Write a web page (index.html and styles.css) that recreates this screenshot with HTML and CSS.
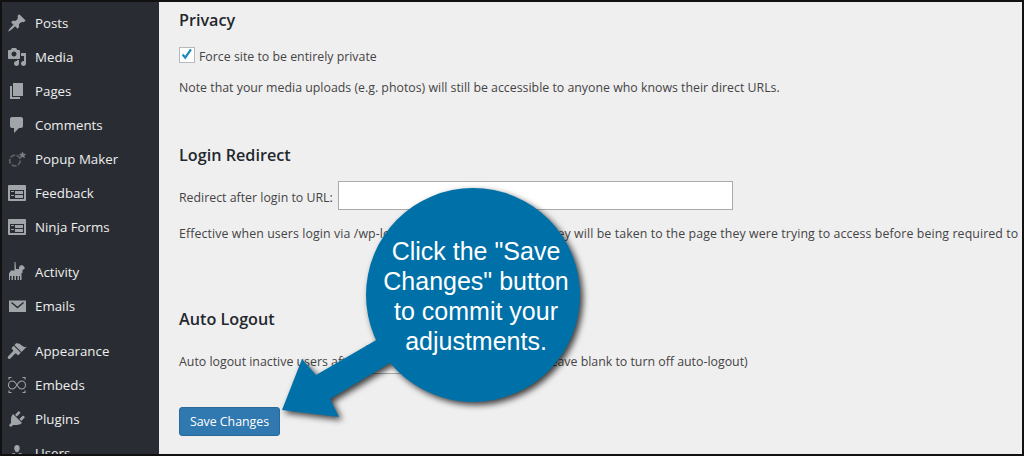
FILE: index.html
```html
<!DOCTYPE html>
<html lang="en">
<head>
<meta charset="utf-8">
<title>Settings</title>
<link rel="stylesheet" href="styles.css">
</head>
<body>
<div class="frame">
  <nav class="sidebar">
    <ul class="menu">
      <li class="item"><svg class="icon" viewBox="0 0 20 20"><path d="M10.44 3.02l1.82-1.82 6.36 6.35-1.83 1.82c-1.05-.68-2.48-.57-3.41.36l-.75.75c-.92.93-1.04 2.35-.35 3.41l-1.83 1.82-2.41-2.41-2.8 2.79c-.42.42-3.38 2.71-3.8 2.29s1.86-3.39 2.28-3.81l2.79-2.79L4.1 9.36l1.83-1.82c1.05.69 2.48.57 3.4-.36l.75-.75c.93-.92 1.05-2.35.36-3.41z"/></svg>Posts</li>
      <li class="item"><svg class="icon" viewBox="0 0 20 20"><path d="M13 11V4c0-.55-.45-1-1-1h-1.67L9 1H5L3.67 3H2c-.55 0-1 .45-1 1v7c0 .55.45 1 1 1h10c.55 0 1-.45 1-1zM7 4.5c1.38 0 2.5 1.12 2.5 2.5S8.38 9.5 7 9.5 4.5 8.38 4.5 7 5.62 4.5 7 4.5zM14 6h5v10.5c0 1.38-1.12 2.5-2.5 2.5S14 17.88 14 16.5s1.12-2.5 2.5-2.5c.17 0 .34.02.5.05V9h-3V6zm-4 8.05V13h2v3.5c0 1.38-1.12 2.5-2.5 2.5S7 17.88 7 16.5 8.12 14 9.5 14c.17 0 .34.02.5.05z"/></svg>Media</li>
      <li class="item"><svg class="icon" viewBox="0 0 20 20"><path d="M6 15V2h10v13H6zm-1 1h8v2H3V5h2v11z"/></svg>Pages</li>
      <li class="item"><svg class="icon" viewBox="0 0 20 20"><path d="M5 2h9c1.1 0 2 .9 2 2v7c0 1.1-.9 2-2 2h-2l-5 5v-5H5c-1.1 0-2-.9-2-2V4c0-1.1.9-2 2-2z"/></svg>Comments</li>
      <li class="item"><svg class="icon icon-popup" viewBox="0 0 20 20"><circle class="ring" cx="8" cy="11.500" r="5.300"/><path d="M15.500 2.500l1.200 2.200 2.400.4-1.700 1.700.4 2.400-2.300-1.100-2.200 1.100.4-2.400-1.700-1.700 2.400-.4z"/></svg>Popup Maker</li>
      <li class="item"><svg class="icon" viewBox="0 0 20 20"><path d="M2 2h16c.55 0 1 .45 1 1v14c0 .55-.45 1-1 1H2c-.55 0-1-.45-1-1V3c0-.55.45-1 1-1zm15 14V7H3v9h14zM4 8v1h3V8H4zm4 0v3h8V8H8zm-4 4v1h3v-1H4zm4 0v3h8v-3H8z"/></svg>Feedback</li>
      <li class="item"><svg class="icon" viewBox="0 0 20 20"><path d="M2 2h16c.55 0 1 .45 1 1v14c0 .55-.45 1-1 1H2c-.55 0-1-.45-1-1V3c0-.55.45-1 1-1zm15 14V7H3v9h14zM4 8v1h3V8H4zm4 0v3h8V8H8zm-4 4v1h3v-1H4zm4 0v3h8v-3H8z"/></svg>Ninja Forms</li>
      <li class="sep"></li>
      <li class="item"><svg class="icon" viewBox="0 0 20 20"><path d="M7.500 0h1l.5 7h3V5l2-2 2 .5 2 2.500-1.500 1.500-1 .5V11h-1v7h-1.500v-4H12v4h-1.500v-4H9v4H7.500v-4H6v4H4.500v-4H3v4H2v-6.500L4 8.500h3.500z"/></svg>Activity</li>
      <li class="item"><svg class="icon" viewBox="0 0 20 20"><rect x="2" y="4.500" width="17" height="11.500"/><path class="chevron" d="M4.500 6.500l6 5 6-5"/></svg>Emails</li>
      <li class="sep"></li>
      <li class="item"><svg class="icon" viewBox="0 0 20 20"><path d="M14.480 11.060L7.410 3.990l1.500-1.500c.5-.56 2.300-.47 3.510.32 1.210.8 1.430 1.280 2.910 2.100 1.180.64 2.450 1.260 4.450.85zm-.71.71L6.700 4.700 4.930 6.470c-.39.39-.39 1.020 0 1.410l1.060 1.060c.39.39.39 1.030 0 1.420L1.500 14.900c-1 1-1 1.700-.3 2.500s1.600.6 2.400-.2l4.300-4.400c.39-.39 1.030-.39 1.420 0l1.060 1.060c.39.39 1.020.39 1.410 0z"/></svg>Appearance</li>
      <li class="item"><svg class="icon icon-thin" viewBox="0 0 20 20"><path d="M2 4.500V2.500h2.500M15.500 2.500H18v2M2 15.500v2h2.500M15.500 17.500H18v-2M10 10C8.500 7.500 7 6 5.500 6a4 4 0 0 0 0 8C7 14 8.500 12.500 10 10s3-4 4.500-4a4 4 0 0 1 0 8C13 14 11.500 12.500 10 10z"/></svg>Embeds</li>
      <li class="item"><svg class="icon" viewBox="0 0 20 20"><path d="M13.110 4.360L9.870 7.600 8 5.730l3.240-3.240c.35-.34 1.050-.2 1.560.32.52.51.66 1.210.31 1.550zm-8 1.770l.91-1.120 9.010 9.010-1.190.84c-.71.71-2.630 1.160-3.820 1.160H6.140L4.900 17.260c-.59.59-1.540.59-2.120 0-.59-.58-.59-1.530 0-2.120l1.240-1.240v-3.880c0-1.130.4-3.190 1.090-3.890zm7.260 3.970l3.240-3.240c.34-.35 1.040-.21 1.550.31.52.51.66 1.210.31 1.550l-3.240 3.250z"/></svg>Plugins</li>
      <li class="item"><svg class="icon" viewBox="0 0 20 20"><path d="M10 9.250c-2.270 0-2.730-3.440-2.730-3.440C7 4.020 7.820 2 9.970 2c2.160 0 2.980 2.020 2.710 3.810 0 0-.41 3.440-2.680 3.440zm0 2.570L12.720 10c2.390 0 4.520 2.330 4.520 4.530v2.490s-3.650 1.130-7.240 1.130c-3.650 0-7.240-1.130-7.240-1.130v-2.490c0-2.250 1.940-4.480 4.470-4.480z"/></svg>Users</li>
    </ul>
  </nav>
  <main class="content">
    <section class="privacy">
      <h2 class="title">Privacy</h2>
      <label class="check-row"><span class="checkbox"><svg viewBox="0 0 16 16"><path d="M3 7.500l3 3.500L12.500 1.500" /></svg></span>Force site to be entirely private</label>
      <p class="note note-privacy">Note that your media uploads (e.g. photos) will still be accessible to anyone who knows their direct URLs.</p>
    </section>
    <section class="redirect">
      <h2 class="title">Login Redirect</h2>
      <div class="field-row">Redirect after login to URL:<span class="input input-wide"></span></div>
      <p class="note note-long">Effective when users login via /wp-login.php directly otherwise they will be taken to the page they were trying to access before being required to login.</p>
    </section>
    <section class="logout">
      <h2 class="title">Auto Logout</h2>
      <div class="field-row">Auto logout inactive users after:<span class="input input-small"></span>minutes (leave blank to turn off auto-logout)</div>
    </section>
    <button class="save" type="button">Save Changes</button>
  </main>
  <aside class="callout">
    <svg class="callout-art" viewBox="0 0 330 240"><g><circle cx="193" cy="109" r="107"/><path d="M2 224L22 173 36 189 110 146 130 165 50 213 59 231z"/></g></svg>
    <p class="callout-text">Click the "Save Changes" button to commit your adjustments.</p>
  </aside>
</div>
</body>
</html>
```
FILE: styles.css
```css
* { box-sizing: border-box; }
html, body { margin: 0; height: 456px; overflow: hidden; }
.frame {
  position: relative;
  display: flex;
  height: 456px;
  border: 2px solid #111;
  background: #f0eff0;
  overflow: hidden;
  font-family: "Open Sans", "Liberation Sans", sans-serif;
}
.sidebar {
  flex: 0 0 157px;
  background: #292d33;
  overflow: hidden;
  color: #eeeeee;
  font-size: 13.300px;
}
.menu { list-style: none; margin: 0; padding: 4px 0 0; }
.item {
  display: flex;
  align-items: center;
  height: 34px;
  padding-left: 5px;
  white-space: nowrap;
}
.sep { height: 11px; }
.icon { flex: none; width: 20px; height: 20px; margin-right: 8px; fill: #a0a5aa; }
.icon-popup { fill: #7a7e83; }
.ring { fill: none; stroke: #5c6065; stroke-width: 1.800; stroke-dasharray: 5 1.500; }
.chevron { fill: none; stroke: #292d33; stroke-width: 1.500; }
.icon-thin { fill: none; stroke: #a0a5aa; stroke-width: 1.100; }
.content {
  flex: 1;
  min-width: 0;
  padding: 8px 0 0 20px;
  overflow: hidden;
  color: #444;
  font-size: 12.350px;
  white-space: nowrap;
}
.title { margin: 0; font-size: 16.200px; font-weight: 600; line-height: 20px; color: #23282d; }
.check-row { display: flex; align-items: flex-start; margin-top: 17px; line-height: 20px; }
.checkbox {
  flex: none;
  width: 16px;
  height: 16px;
  margin-right: 4px;
  border: 1px solid #b4b9be;
  background: #fff;
}
.checkbox svg { display: block; width: 14px; height: 14px; fill: none; stroke: #1e8cbe; stroke-width: 2.600; }
.note { margin: 15px 0 0; line-height: 18px; }
.note-privacy { margin-top: 12px; }
.note-long { letter-spacing: .1px; }
.redirect { margin-top: 48px; }
.field-row { display: flex; align-items: flex-start; height: 29px; margin-top: 16px; line-height: 33px; }
.input { display: block; flex: none; height: 29px; border: 1px solid #aaa; background: #fff; }
.input-wide { width: 395px; margin-left: 5px; }
.input-small { width: 124px; margin: 0 4px; }
.logout { margin-top: 66px; }
.save {
  display: block;
  margin-top: 33px;
  width: 101px;
  height: 29px;
  padding: 0;
  border: 1px solid #2a6a9a;
  border-radius: 3px;
  background: #3079b0;
  color: #fff;
  font: 12.350px "Open Sans", "Liberation Sans", sans-serif;
}
.callout { position: absolute; left: 278px; top: 184px; width: 330px; height: 240px; }
.callout-art { display: block; width: 330px; height: 240px; overflow: visible; fill: #0071a8; filter: drop-shadow(3px 3px 3px rgba(0,0,0,.75)); }
.callout-text {
  position: absolute;
  left: 96px;
  top: 50px;
  width: 200px;
  margin: 0;
  color: #fff;
  font: 25px/30px "Liberation Sans", Arial, sans-serif;
  text-align: center;
}
```
